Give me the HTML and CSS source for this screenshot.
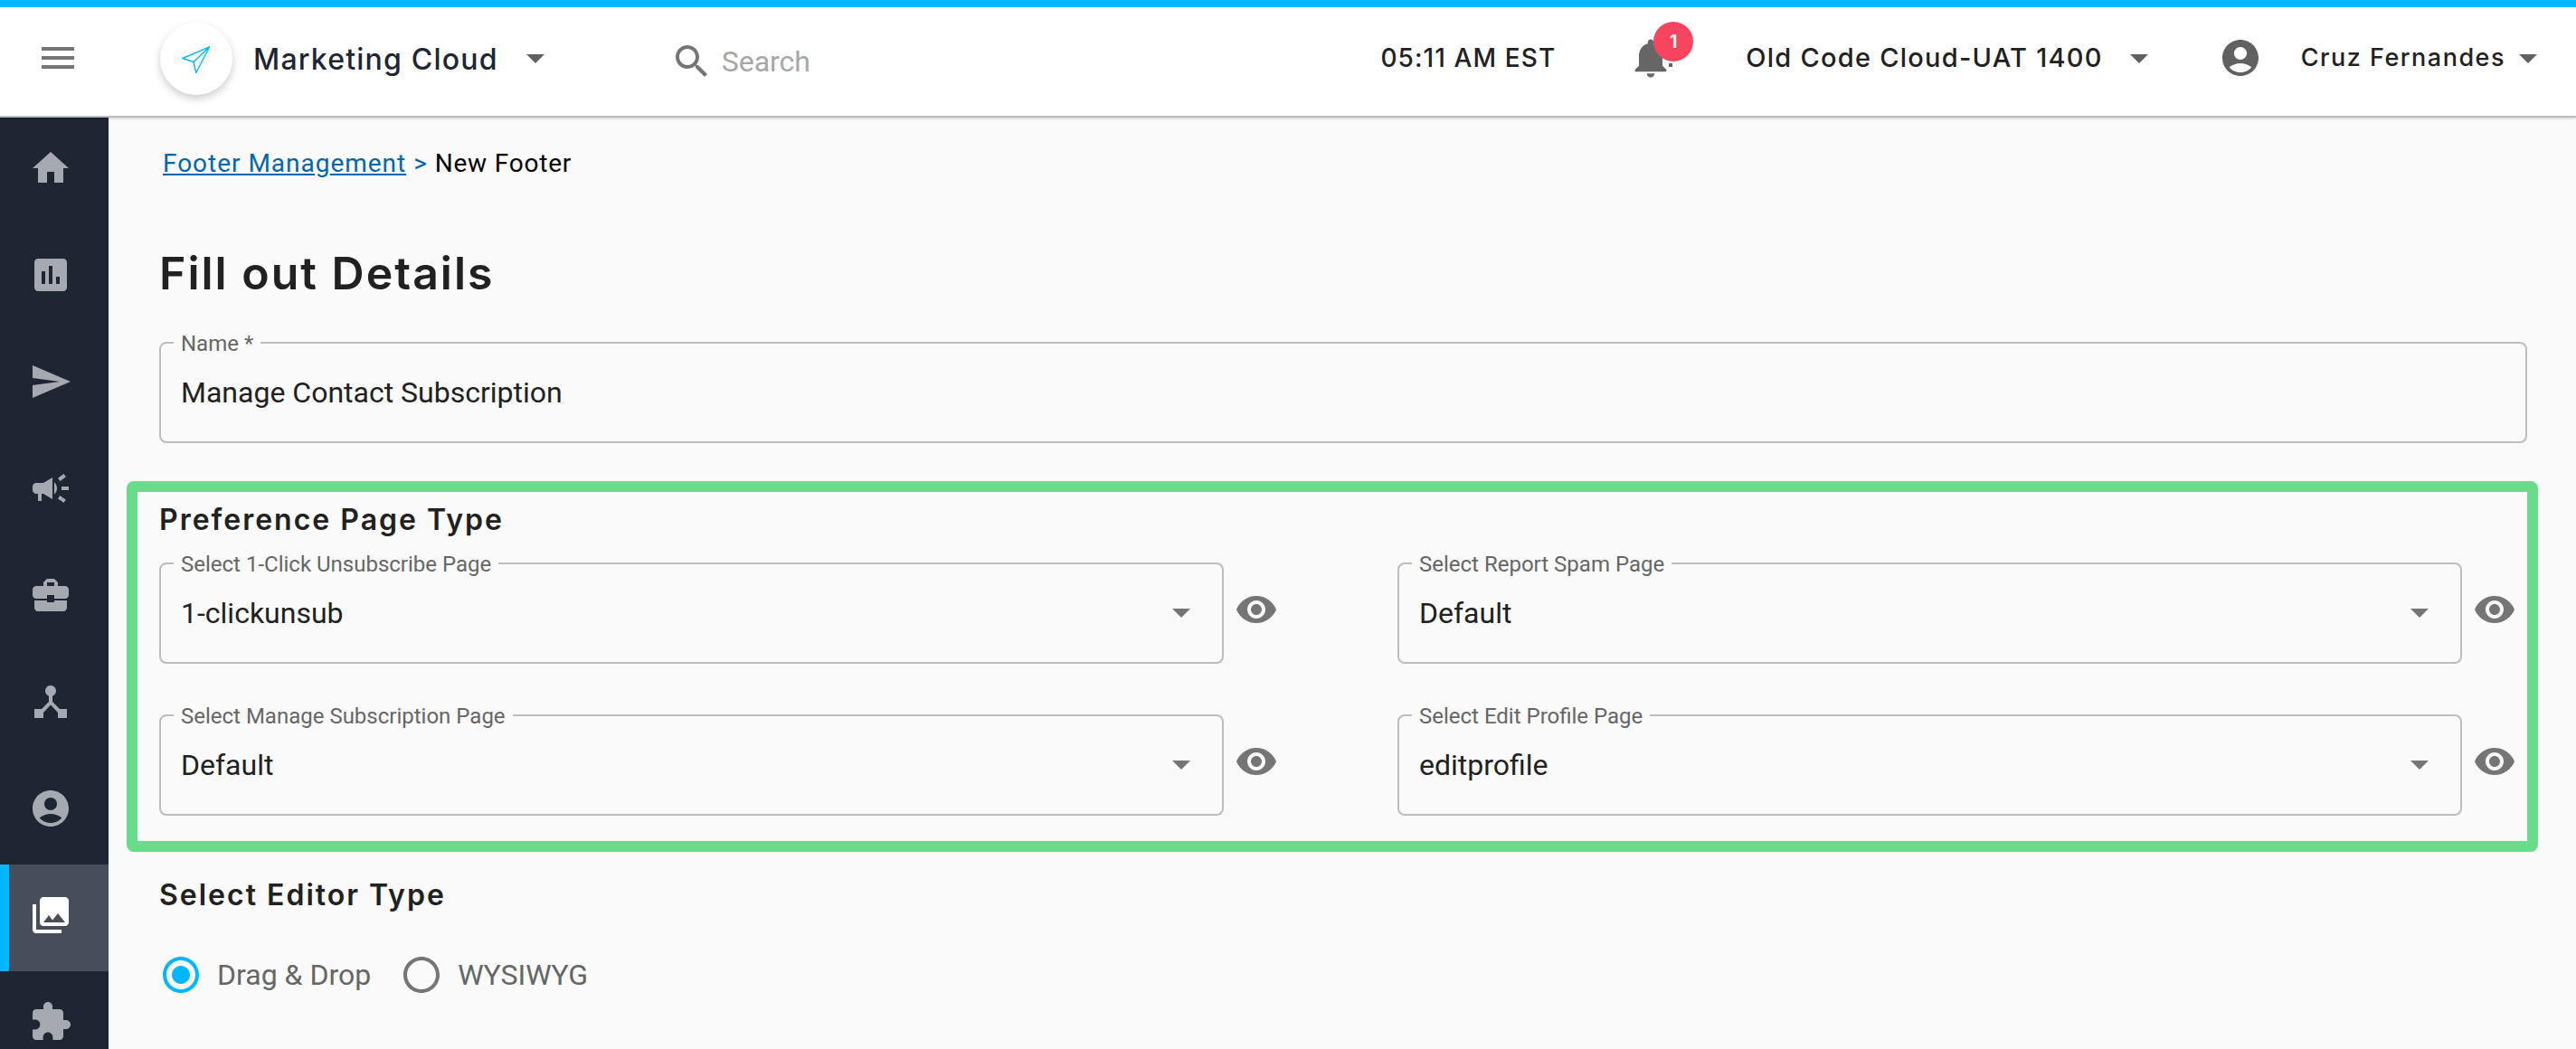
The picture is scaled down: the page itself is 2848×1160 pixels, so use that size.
FILE: index.html
```html
<!DOCTYPE html>
<html lang="en">
<head>
<meta charset="utf-8">
<title>New Footer</title>
<link rel="stylesheet" href="styles.css">
</head>
<body>
<div class="app">
  <header class="topbar">
    <button class="menu-btn" aria-label="Menu"><svg class="icon" viewBox="0 0 24 24"><path d="M3 18h18v-2H3v2zm0-5h18v-2H3v2zm0-7v2h18V6H3z"/></svg></button>
    <div class="logo"><svg class="logo-plane" viewBox="0 0 32 30"><path d="M30.7.8 1 13.5 13 17.5 15.7 29.5zM30.7.8 13 17.5" fill="none" stroke="#00b6ff" stroke-width="1.4" stroke-linejoin="round"/></svg></div>
    <div class="brand">Marketing Cloud</div>
    <span class="caret brand-caret"></span>
    <div class="search"><svg class="icon" viewBox="0 0 24 24"><path d="M15.5 14h-.79l-.28-.27C15.41 12.59 16 11.11 16 9.5 16 5.91 13.09 3 9.5 3S3 5.91 3 9.5 5.91 16 9.5 16c1.61 0 3.09-.59 4.23-1.57l.27.28v.79l5 4.99L20.49 19l-4.99-5zm-6 0C7.01 14 5 11.99 5 9.5S7.01 5 9.5 5 14 7.01 14 9.5 11.99 14 9.5 14z"/></svg><span class="search-text">Search</span></div>
    <div class="top-right">
      <span class="clock">05:11 AM EST</span>
      <div class="bell"><svg class="bell-icon" viewBox="0 0 24 24"><path d="M12 22c1.1 0 2-.9 2-2h-4c0 1.1.89 2 2 2zm6-6v-5c0-3.07-1.64-5.64-4.5-6.32V4c0-.83-.67-1.5-1.5-1.5s-1.5.67-1.5 1.5v.68C7.63 5.36 6 7.92 6 11v5l-2 2v1h16v-1l-2-2z"/></svg><span class="bell-dot"></span><span class="badge">1</span></div>
      <span class="org">Old Code Cloud-UAT 1400</span>
      <span class="caret org-caret"></span>
      <svg class="icon account" viewBox="0 0 24 24"><path d="M12 2C6.48 2 2 6.48 2 12s4.48 10 10 10 10-4.48 10-10S17.52 2 12 2zm0 4c1.93 0 3.5 1.57 3.5 3.5S13.93 13 12 13s-3.5-1.57-3.5-3.5S10.07 6 12 6zm0 14c-2.03 0-4.43-.82-6.14-2.88C7.55 15.8 9.68 15 12 15s4.45.8 6.14 2.12C16.43 19.18 14.03 20 12 20z"/></svg>
      <span class="user">Cruz Fernandes</span>
      <span class="caret user-caret"></span>
    </div>
  </header>
  <div class="body">
    <nav class="sidebar">
      <a class="nav-item"><svg class="icon" viewBox="0 0 24 24"><path d="M10 20v-6h4v6h5v-8h3L12 3 2 12h3v8z"/></svg></a>
      <a class="nav-item"><svg class="icon" viewBox="0 0 24 24"><path d="M19 3H5c-1.1 0-2 .9-2 2v14c0 1.1.9 2 2 2h14c1.1 0 2-.9 2-2V5c0-1.1-.9-2-2-2zM9 17H7v-7h2v7zm4 0h-2V7h2v10zm4 0h-2v-4h2v4z"/></svg></a>
      <a class="nav-item"><svg class="icon" viewBox="0 0 24 24"><path d="M2.01 21 23 12 2.01 3 2 10l15 2-15 2z"/></svg></a>
      <a class="nav-item"><svg class="icon" viewBox="0 0 24 24"><path d="M18 11v2h4v-2h-4zm-2 6.61c.96.71 2.21 1.65 3.2 2.39.4-.53.8-1.07 1.2-1.6-.99-.74-2.24-1.68-3.2-2.4-.4.54-.8 1.08-1.2 1.61zM20.4 5.6c-.4-.53-.8-1.07-1.2-1.6-.99.74-2.24 1.68-3.2 2.4.4.53.8 1.07 1.2 1.6.96-.72 2.21-1.65 3.2-2.4zM4 9c-1.1 0-2 .9-2 2v2c0 1.1.9 2 2 2h1v4h2v-4h1l5 3V6L8 9H4zm11.5 3c0-1.33-.58-2.53-1.5-3.35v6.69c.92-.81 1.5-2.01 1.5-3.34z"/></svg></a>
      <a class="nav-item"><svg class="icon" viewBox="0 0 24 24"><path d="M10 16v-1H3.01L3 19c0 1.11.89 2 2 2h14c1.11 0 2-.89 2-2v-4h-7v1h-4zm10-9h-4.01V5l-2-2h-4l-2 2v2H4c-1.1 0-2 .9-2 2v3c0 1.11.89 2 2 2h6v-2h4v2h6c1.1 0 2-.9 2-2V9c0-1.1-.9-2-2-2zm-6 0h-4V5h4v2z"/></svg></a>
      <a class="nav-item"><svg class="icon" viewBox="0 0 24 24"><path d="M17 16l-4-4V8.82C14.16 8.4 15 7.3 15 6c0-1.66-1.34-3-3-3S9 4.34 9 6c0 1.3.84 2.4 2 2.82V12l-4 4H3v5h5v-3.05l4-4.2 4 4.2V21h5v-5h-4z"/></svg></a>
      <a class="nav-item"><svg class="icon" viewBox="0 0 24 24"><path d="M12 2C6.48 2 2 6.48 2 12s4.48 10 10 10 10-4.48 10-10S17.52 2 12 2zm0 4c1.93 0 3.5 1.57 3.5 3.5S13.93 13 12 13s-3.5-1.57-3.5-3.5S10.07 6 12 6zm0 14c-2.03 0-4.43-.82-6.14-2.88C7.55 15.8 9.68 15 12 15s4.45.8 6.14 2.12C16.43 19.18 14.03 20 12 20z"/></svg></a>
      <a class="nav-item active"><svg class="icon" viewBox="0 0 24 24"><path d="M22 16V4c0-1.1-.9-2-2-2H8c-1.1 0-2 .9-2 2v12c0 1.1.9 2 2 2h12c1.1 0 2-.9 2-2zm-11-4 2.03 2.71L16 11l4 5H8l3-4zM2 6v14c0 1.1.9 2 2 2h14v-2H4V6H2z"/></svg></a>
      <a class="nav-item"><svg class="icon" viewBox="0 0 24 24"><path d="M20.5 11H19V7c0-1.1-.9-2-2-2h-4V3.5C13 2.12 11.88 1 10.5 1S8 2.12 8 3.5V5H4c-1.1 0-1.99.9-1.99 2v3.8H3.5c1.49 0 2.7 1.21 2.7 2.7s-1.21 2.7-2.7 2.7H2V20c0 1.1.9 2 2 2h3.8v-1.5c0-1.49 1.21-2.7 2.7-2.7 1.49 0 2.7 1.21 2.7 2.7V22H17c1.1 0 2-.9 2-2v-4h1.5c1.38 0 2.5-1.12 2.5-2.5S21.88 11 20.5 11z"/></svg></a>
    </nav>
    <main class="main">
      <div class="breadcrumb"><a class="crumb-link">Footer Management</a><span class="crumb-sep">&gt;</span><span class="crumb-current">New Footer</span></div>
      <h1 class="page-title">Fill out Details</h1>
      <fieldset class="field name-field">
        <legend>Name *</legend>
        <div class="field-value">Manage Contact Subscription</div>
      </fieldset>
      <section class="pref-box">
        <h2 class="section-title">Preference Page Type</h2>
        <div class="pref-grid">
          <div class="pref-cell">
            <fieldset class="field select"><legend>Select 1-Click Unsubscribe Page</legend><div class="field-value">1-clickunsub</div><span class="caret select-caret"></span></fieldset>
            <svg class="icon eye" viewBox="0 0 24 24"><path d="M12 4.5C7 4.5 2.73 7.61 1 12c1.73 4.39 6 7.5 11 7.5s9.27-3.11 11-7.5c-1.73-4.39-6-7.5-11-7.5zM12 17c-2.76 0-5-2.24-5-5s2.24-5 5-5 5 2.24 5 5-2.24 5-5 5zm0-8c-1.66 0-3 1.34-3 3s1.34 3 3 3 3-1.34 3-3-1.34-3-3-3z"/></svg>
          </div>
          <div class="pref-cell">
            <fieldset class="field select"><legend>Select Report Spam Page</legend><div class="field-value">Default</div><span class="caret select-caret"></span></fieldset>
            <svg class="icon eye" viewBox="0 0 24 24"><path d="M12 4.5C7 4.5 2.73 7.61 1 12c1.73 4.39 6 7.5 11 7.5s9.27-3.11 11-7.5c-1.73-4.39-6-7.5-11-7.5zM12 17c-2.76 0-5-2.24-5-5s2.24-5 5-5 5 2.24 5 5-2.24 5-5 5zm0-8c-1.66 0-3 1.34-3 3s1.34 3 3 3 3-1.34 3-3-1.34-3-3-3z"/></svg>
          </div>
          <div class="pref-cell">
            <fieldset class="field select"><legend>Select Manage Subscription Page</legend><div class="field-value">Default</div><span class="caret select-caret"></span></fieldset>
            <svg class="icon eye" viewBox="0 0 24 24"><path d="M12 4.5C7 4.5 2.73 7.61 1 12c1.73 4.39 6 7.5 11 7.5s9.27-3.11 11-7.5c-1.73-4.39-6-7.5-11-7.5zM12 17c-2.76 0-5-2.24-5-5s2.24-5 5-5 5 2.24 5 5-2.24 5-5 5zm0-8c-1.66 0-3 1.34-3 3s1.34 3 3 3 3-1.34 3-3-1.34-3-3-3z"/></svg>
          </div>
          <div class="pref-cell">
            <fieldset class="field select"><legend>Select Edit Profile Page</legend><div class="field-value">editprofile</div><span class="caret select-caret"></span></fieldset>
            <svg class="icon eye" viewBox="0 0 24 24"><path d="M12 4.5C7 4.5 2.73 7.61 1 12c1.73 4.39 6 7.5 11 7.5s9.27-3.11 11-7.5c-1.73-4.39-6-7.5-11-7.5zM12 17c-2.76 0-5-2.24-5-5s2.24-5 5-5 5 2.24 5 5-2.24 5-5 5zm0-8c-1.66 0-3 1.34-3 3s1.34 3 3 3 3-1.34 3-3-1.34-3-3-3z"/></svg>
          </div>
        </div>
      </section>
      <h2 class="section-title editor-title">Select Editor Type</h2>
      <div class="radios">
        <label class="radio"><svg class="icon radio-on" viewBox="0 0 24 24"><path d="M12 7c-2.76 0-5 2.24-5 5s2.24 5 5 5 5-2.24 5-5-2.24-5-5-5zm0-5C6.48 2 2 6.48 2 12s4.48 10 10 10 10-4.48 10-10S17.52 2 12 2zm0 18c-4.42 0-8-3.58-8-8s3.58-8 8-8 8 3.58 8 8-3.58 8-8 8z"/></svg><span>Drag &amp; Drop</span></label>
        <label class="radio"><svg class="icon" viewBox="0 0 24 24"><path d="M12 2C6.48 2 2 6.48 2 12s4.48 10 10 10 10-4.48 10-10S17.52 2 12 2zm0 18c-4.42 0-8-3.58-8-8s3.58-8 8-8 8 3.58 8 8-3.58 8-8 8z"/></svg><span>WYSIWYG</span></label>
      </div>
    </main>
  </div>
</div>
</body>
</html>
```
FILE: styles.css
```css
* { box-sizing: border-box; }
html, body { margin: 0; height: 100%; overflow: hidden; }
body { font-family: Roboto, "Liberation Sans", sans-serif; background: #fafafa; color: #212121; }
.app { height: 1160px; display: flex; flex-direction: column; overflow: hidden; }
.icon { width: 48px; height: 48px; fill: #757575; flex: none; display: block; }

.topbar { position: relative; z-index: 2; height: 130px; flex: none; background: #fff; border-top: 8px solid #00b6ff; border-bottom: 2px solid #bdbdbd; box-shadow: 0 1px 3px rgba(0,0,0,.2); display: flex; align-items: flex-start; font-family: Inter, sans-serif; }
.menu-btn { border: 0; padding: 0; background: none; margin: 32px 0 0 40px; }
.logo { width: 80px; height: 80px; margin: 17px 0 0 89px; padding-top: 2px; border-radius: 50%; background: #fff; box-shadow: 0 4px 10px rgba(0,0,0,.2); display: flex; align-items: center; justify-content: center; flex: none; }
.logo-plane { width: 32px; height: 30px; }
.brand { margin: 37px 0 0 23px; font-size: 32px; line-height: 42px; font-weight: 500; letter-spacing: 1.2px; color: #1e2533; white-space: nowrap; }
.caret { width: 0; height: 0; border-left: 10px solid transparent; border-right: 10px solid transparent; border-top: 10px solid #616161; flex: none; display: block; }
.brand-caret { margin: 52px 0 0 31px; }
.search { display: flex; align-items: center; margin: 36px 0 0 139px; }
.search-text { font-family: Roboto, sans-serif; font-size: 32px; color: #a6a6a6; margin-left: 9px; }
.top-right { margin-left: auto; display: flex; align-items: flex-start; padding-right: 43px; }
.clock { margin-top: 37px; font-size: 28px; line-height: 38px; font-weight: 500; color: #212121; letter-spacing: 1.1px; white-space: nowrap; }
.bell { position: relative; margin: 30px 0 0 79px; }
.bell-icon { width: 52px; height: 52px; fill: #666; display: block; }
.bell-dot { position: absolute; left: 46px; top: 32px; width: 4px; height: 4px; background: #666; }
.badge { position: absolute; left: 29px; top: -14px; width: 44px; height: 44px; border-radius: 50%; background: #f74560; color: #fff; font-size: 20px; font-weight: 600; display: flex; align-items: center; justify-content: center; }
.org { margin: 37px 0 0 79px; font-size: 29px; line-height: 38px; font-weight: 500; letter-spacing: 1.25px; white-space: nowrap; }
.org-caret { margin: 52px 0 0 30px; }
.account { margin: 32px 0 0 78px; fill: #616161; }
.user { margin: 38px 0 0 43px; font-size: 27px; line-height: 36px; font-weight: 500; letter-spacing: 1.5px; white-space: nowrap; }
.user-caret { margin: 52px 0 0 15px; }

.body { flex: 1; display: flex; min-height: 0; }
.sidebar { width: 120px; flex: none; background: #1e2533; overflow: hidden; }
.nav-item { display: block; height: 118px; padding: 32px 0 0 32px; }
.nav-item .icon { fill: #a7a9b0; }
.nav-item.active { background: #474e59; border-left: 10px solid #00b6ff; padding-left: 22px; }
.nav-item.active .icon { fill: #fff; }

.main { flex: 1; min-width: 0; padding: 0 54px 0 56px; }
.breadcrumb { margin-top: 33px; padding-left: 4px; font-size: 28px; line-height: 36px; letter-spacing: .8px; display: flex; color: #000; white-space: pre; }
.crumb-link { color: #0066aa; text-decoration: underline; letter-spacing: .98px; }
.crumb-sep { color: #0066aa; margin: 0 8px; }
.page-title { margin: 73px 0 0; font-family: Inter, sans-serif; font-size: 50px; line-height: 60px; font-weight: 600; color: #212121; letter-spacing: 2px; }
.field { margin: 0; padding: 0 22px; border: 2px solid #bdbdbd; border-radius: 8px; min-width: 0; position: relative; }
.field legend { padding: 2px 8px 0; margin-left: -8px; font-size: 24px; line-height: 24px; color: #666; }
.field-value { font-size: 32px; line-height: 40px; color: #212121; padding-top: 22px; }
.name-field { margin-top: 34px; height: 124px; }
.pref-box { margin: 42px 0 0 -36px; width: 2666px; height: 410px; border: 12px solid #69db8a; border-radius: 8px; padding: 9px 0 0 24px; }
.section-title { margin: 0; font-family: Inter, sans-serif; font-size: 32px; line-height: 44px; font-weight: 600; letter-spacing: 2px; color: #212121; }
.pref-grid { display: grid; grid-template-columns: 1369px 1fr; row-gap: 44px; margin-top: 13px; }
.pref-cell { display: flex; align-items: flex-start; }
.select { width: 1177px; height: 124px; }
.select-caret { position: absolute; right: 35px; top: 37px; border-top-color: #757575; }
.eye { margin: 40px 0 0 12px; }
.editor-title { margin-top: 26px; }
.radios { display: flex; margin-top: 42px; gap: 32px; }
.radio { display: flex; align-items: center; font-size: 32px; color: #666; gap: 16px; }
.radio-on { fill: #00b6ff; }
```
